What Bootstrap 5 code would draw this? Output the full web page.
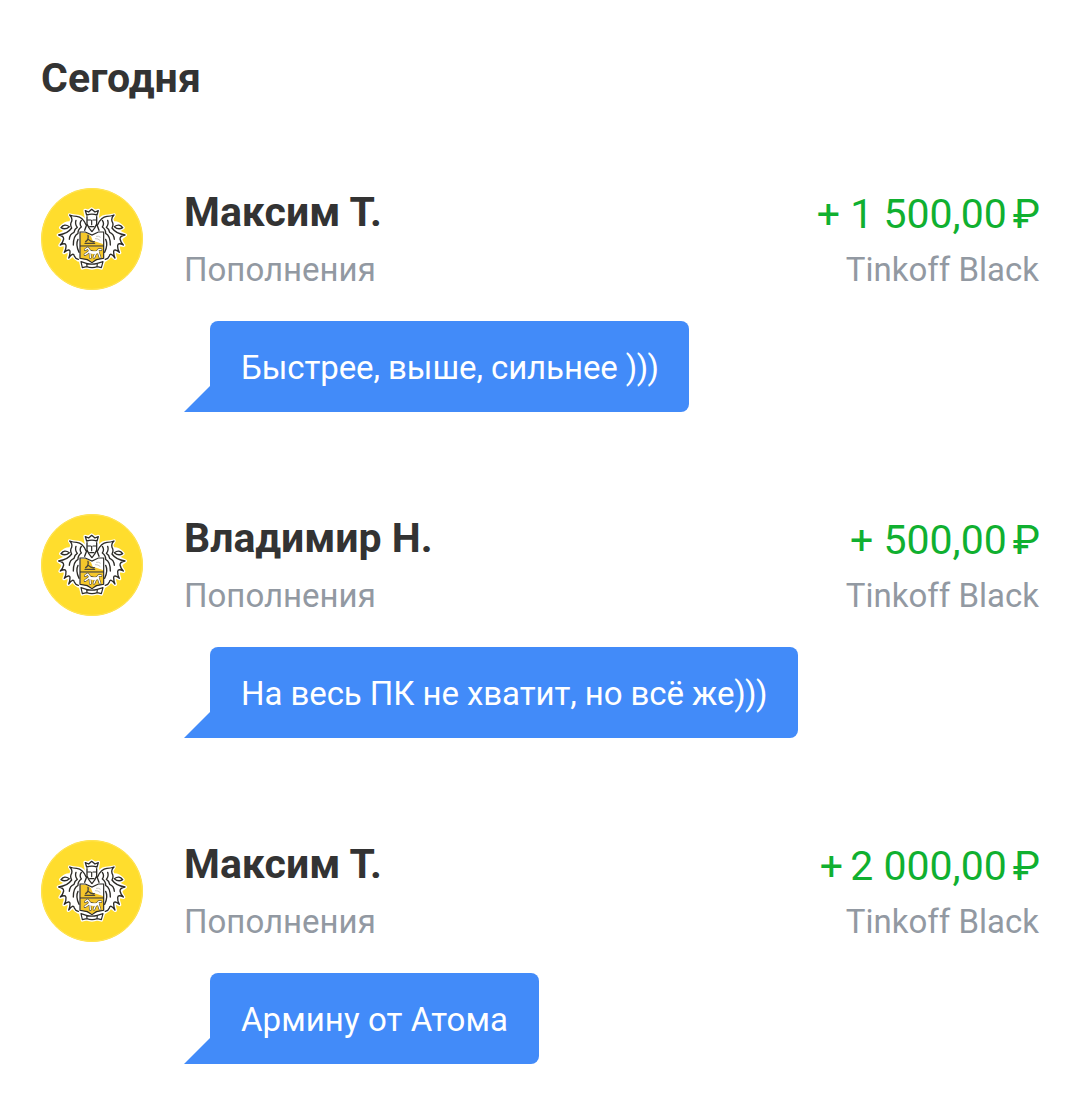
<!DOCTYPE html>
<html lang="ru">
  <head>
    <meta charset="UTF-8" />
    <meta name="viewport" content="width=device-width, initial-scale=1" />
    <title>Операции</title>
    <link
      href="https://cdn.jsdelivr.net/npm/bootstrap@5.3.2/dist/css/bootstrap.min.css"
      rel="stylesheet"
    />
    <style>
      body {
        background-color: #fff;
        color: #333;
        font-family: Roboto, "Liberation Sans", sans-serif;
      }
      .feed {
        padding: 54px 40px 0 41px;
      }
      .day-title {
        font-size: 41px;
        line-height: 48px;
        font-weight: 700;
        margin-bottom: 86px;
        letter-spacing: 0.1px;
      }
      .operation {
        height: 326px;
      }
      .operation:last-child {
        height: 224px;
      }
      .operation-head {
        height: 133px;
        gap: 41px;
      }
      .avatar {
        width: 102px;
        height: 102px;
      }
      .sender,
      .amount {
        font-size: 41px;
        line-height: 48px;
      }
      .sender {
        font-weight: 700;
      }
      .amount {
        color: #10b030;
        padding-top: 2px;
      }
      .plus-tight {
        letter-spacing: -1.5px;
      }
      .ruble {
        margin-left: 6px;
      }
      .note {
        color: #9299a2;
        font-size: 33px;
        line-height: 40px;
        margin-top: 14px;
      }
      .amount + .note {
        margin-top: 12px;
        padding-right: 1px;
      }
      .bubble {
        background-color: #428bf9;
        border-radius: 8px 8px 8px 0;
        font-size: 33px;
        line-height: 39px;
        height: 91px;
        margin-left: 169px;
        padding: 27px 31px 25px;
      }
      .bubble-text {
        letter-spacing: -0.08px;
      }
      .bubble-text-wide {
        letter-spacing: 0.07px;
      }
      .smile {
        letter-spacing: -0.7px;
      }
      .bubble::before {
        content: "";
        position: absolute;
        left: -26px;
        bottom: 0;
        width: 27px;
        height: 27px;
        background-color: #428bf9;
        clip-path: polygon(100% 0, 100% 100%, 0 100%);
      }
    </style>
  </head>
  <body>
    <!-- Coat of arms, the left mantle is mirrored for the right side -->
    <svg class="d-none">
      <defs>
        <path
          id="mantleShape"
          d="M152 119 Q142 99 127 97 Q113 96 101 93 L108 105 L104 117 Q88 115 74 131 Q86 140 98 135 Q84 147 67 153 L81 163 Q81 173 72 184 L88 181 Q90 194 84 206 L100 199 Q101 212 97 223 L111 212 Q116 223 127 228 L134 220 L144 180 Z"
        />
        <g id="mantleLines">
          <path d="M150 122 Q140 99 122 97 Q111 97 101 93 Q110 101 107 112 Q101 121 107 132 Q95 149 68 153 Q83 155 83 165 Q81 175 73 183 Q88 175 90 184 Q91 195 85 205 Q101 192 102 203 Q102 214 98 222 Q112 203 115 216 Q118 224 127 226" />
          <path d="M75 131 Q85 117 100 128 Q88 139 75 131 Z" />
          <path d="M120 109 Q116 121 124 130 Q116 134 114 145 Q101 150 100 166" />
          <path d="M136 109 Q129 119 136 129 Q125 137 126 148 Q112 155 112 183" />
          <path d="M126 166 Q118 181 129 205" />
        </g>
        <symbol id="crest" viewBox="15 12 306 306">
          <circle cx="168" cy="165" r="153" fill="#ffdd2d" />
          <circle cx="168" cy="165" r="151" fill="none" stroke="#ffe458" stroke-width="3" />
          <g fill="#fff" stroke="#fff" stroke-width="10" stroke-linejoin="round">
            <use href="#mantleShape" />
            <use href="#mantleShape" transform="matrix(-1 0 0 1 335 0)" />
            <path d="M147 79 L158 82 L167 75 L177 82 L187 79 L184 100 L187 142 L148 142 L151 100 Z" />
            <path d="M132 143 H203 V223 L168 237 L132 223 Z" />
            <path d="M134 233 L151 236 Q168 242 184 236 L202 233 L196 252 L183 249 Q168 255 152 249 L139 252 Z" />
          </g>
          <g fill="none" stroke="#2b2a26" stroke-width="4" stroke-linecap="round" stroke-linejoin="round">
            <use href="#mantleLines" />
            <use href="#mantleLines" transform="matrix(-1 0 0 1 335 0)" />
            <path d="M152 93 L148 80 L158 84 L167 76 L177 84 L187 80 L183 93 Q168 88 152 93 Z" />
            <path d="M153 98 V120 L146 139 M182 98 V120 L189 139 M153 120 Q158 133 168 143 Q177 133 182 120" />
            <path d="M155 108 H164 M171 108 H180 M167 109 V122 M161 128 H174" stroke-width="3.5" />
            <path d="M135 233 L151 238 Q168 243 184 238 L201 233 L196 251 L184 248 Q168 254 152 248 L139 251 Z M152 239 L153 247 M184 239 L183 247" stroke-width="3.5" />
          </g>
          <path d="M133 146 H202 V186 H133 Z" fill="#fff" />
          <path d="M133 146 H152 L165 157 L170 170 L185 175 L201 180 V186 H133 Z" fill="#f5c72b" />
          <path d="M133 187 H202 V222 L168 234 L133 222 Z" fill="#f5c72b" />
          <!-- lower beast -->
          <path d="M148 197 L155 192 L162 201 Q173 206 184 202 Q188 194 195 197 M187 205 L192 220 M179 208 L174 220 M162 207 L163 221 M157 205 L147 212" fill="none" stroke="#4b4738" stroke-width="7.5" stroke-linecap="round" stroke-linejoin="round" />
          <path d="M148 197 L155 192 L162 201 Q173 206 184 202 Q188 194 195 197 M187 205 L192 220 M179 208 L174 220 M162 207 L163 221 M157 205 L147 212" fill="none" stroke="#fff" stroke-width="4" stroke-linecap="round" stroke-linejoin="round" />
          <path d="M160 203 Q173 209 186 204" fill="none" stroke="#fff" stroke-width="7" stroke-linecap="round" />
          <!-- upper beast -->
          <path d="M149 173 Q159 166 156 154 M158 167 Q164 174 175 173 M147 178 H176" fill="none" stroke="#4b4738" stroke-width="4" stroke-linecap="round" />
          <path d="M180 157 Q188 155 194 160 M177 164 Q187 163 193 170" fill="none" stroke="#bdbbb2" stroke-width="2.5" />
          <path d="M132 144 H148 L168 153 L187 144 H203 V223 L181 227 L168 236 L154 227 L132 223 Z M133 186 H202" fill="none" stroke="#2b2a26" stroke-width="3.5" />
        </symbol>
      </defs>
    </svg>

    <main class="feed">
      <h1 class="day-title">Сегодня</h1>

      <div class="operation">
        <div class="operation-head d-flex align-items-start">
          <svg class="avatar flex-shrink-0"><use href="#crest" /></svg>
          <div class="flex-grow-1">
            <div class="sender">Максим Т.</div>
            <div class="note">Пополнения</div>
          </div>
          <div class="text-end text-nowrap">
            <div class="amount">+ 1 500,00<span class="ruble">₽</span></div>
            <div class="note">Tinkoff Black</div>
          </div>
        </div>
        <div class="d-flex">
          <div class="bubble bubble-text position-relative text-white text-nowrap">Быстрее, выше, сильнее <span class="smile">)))</span></div>
        </div>
      </div>

      <div class="operation">
        <div class="operation-head d-flex align-items-start">
          <svg class="avatar flex-shrink-0"><use href="#crest" /></svg>
          <div class="flex-grow-1">
            <div class="sender">Владимир Н.</div>
            <div class="note">Пополнения</div>
          </div>
          <div class="text-end text-nowrap">
            <div class="amount">+ 500,00<span class="ruble">₽</span></div>
            <div class="note">Tinkoff Black</div>
          </div>
        </div>
        <div class="d-flex">
          <div class="bubble bubble-text position-relative text-white text-nowrap">На весь ПК не хватит, но всё же<span class="smile">)))</span></div>
        </div>
      </div>

      <div class="operation">
        <div class="operation-head d-flex align-items-start">
          <svg class="avatar flex-shrink-0"><use href="#crest" /></svg>
          <div class="flex-grow-1">
            <div class="sender">Максим Т.</div>
            <div class="note">Пополнения</div>
          </div>
          <div class="text-end text-nowrap">
            <div class="amount"><span class="plus-tight">+ </span>2 000,00<span class="ruble">₽</span></div>
            <div class="note">Tinkoff Black</div>
          </div>
        </div>
        <div class="d-flex">
          <div class="bubble bubble-text-wide position-relative text-white text-nowrap">Армину от Атома</div>
        </div>
      </div>
    </main>

    <script src="https://cdn.jsdelivr.net/npm/bootstrap@5.3.2/dist/js/bootstrap.bundle.min.js"></script>
  </body>
</html>
